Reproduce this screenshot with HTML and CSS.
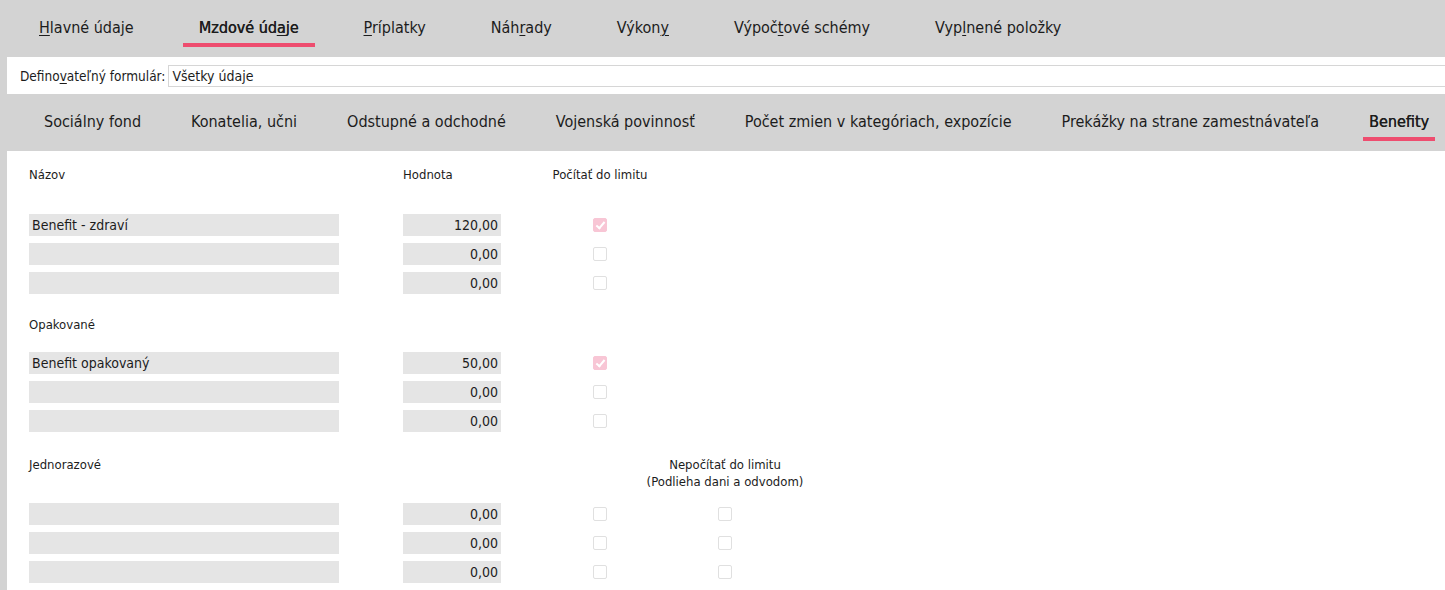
FILE: index.html
```html
<!DOCTYPE html>
<html lang="sk">
<head>
  <meta charset="UTF-8">
  <title>Mzdové údaje - Benefity</title>
  <link rel="stylesheet" href="styles.css">
</head>
<body>
  <!-- horné záložky -->
  <nav class="tabs tabs-main">
    <a class="tab"><span><u>H</u>lavné údaje</span></a>
    <a class="tab active"><span>Mzdové úd<u>a</u>je</span></a>
    <a class="tab"><span><u>P</u>ríplatky</span></a>
    <a class="tab"><span>Náh<u>r</u>ady</span></a>
    <a class="tab"><span>Výkon<u>y</u></span></a>
    <a class="tab"><span>Výpoč<u>t</u>ové schémy</span></a>
    <a class="tab"><span>Vyp<u>l</u>nené položky</span></a>
  </nav>

  <div class="form-bar">
    <label>Defino<u>v</u>ateľný formulár:</label>
    <div class="select">Všetky údaje</div>
  </div>

  <!-- podzáložky mzdových údajov -->
  <nav class="tabs tabs-sub">
    <a class="tab"><span>Sociálny fond</span></a>
    <a class="tab"><span>Konatelia, učni</span></a>
    <a class="tab"><span>Odstupné a odchodné</span></a>
    <a class="tab"><span>Vojenská povinnosť</span></a>
    <a class="tab"><span>Počet zmien v kategóriach, expozície</span></a>
    <a class="tab"><span>Prekážky na strane zamestnávateľa</span></a>
    <a class="tab active"><span>Benefity</span></a>
  </nav>

  <main class="content">
    <div class="grid head-row">
      <div>Názov</div>
      <div>Hodnota</div>
      <div class="center">Počítať do limitu</div>
    </div>

    <div class="grid rows">
      <div class="field">Benefit - zdraví</div>
      <div class="field num">120,00</div>
      <span class="chk checked"></span>
      <div></div>

      <div class="field"></div>
      <div class="field num">0,00</div>
      <span class="chk"></span>
      <div></div>

      <div class="field"></div>
      <div class="field num">0,00</div>
      <span class="chk"></span>
      <div></div>
    </div>

    <div class="section-label">Opakované</div>

    <div class="grid rows">
      <div class="field">Benefit opakovaný</div>
      <div class="field num">50,00</div>
      <span class="chk checked"></span>
      <div></div>

      <div class="field"></div>
      <div class="field num">0,00</div>
      <span class="chk"></span>
      <div></div>

      <div class="field"></div>
      <div class="field num">0,00</div>
      <span class="chk"></span>
      <div></div>
    </div>

    <div class="grid once-row">
      <div>Jednorazové</div>
      <div></div>
      <div></div>
      <div class="center wide">Nepočítať do limitu<br>(Podlieha dani a odvodom)</div>
    </div>

    <div class="grid rows">
      <div class="field"></div>
      <div class="field num">0,00</div>
      <span class="chk"></span>
      <span class="chk"></span>

      <div class="field"></div>
      <div class="field num">0,00</div>
      <span class="chk"></span>
      <span class="chk"></span>

      <div class="field"></div>
      <div class="field num">0,00</div>
      <span class="chk"></span>
      <span class="chk"></span>
    </div>
  </main>
</body>
</html>
```

FILE: styles.css
```css
body {
  margin: 0;
  background-color: #d3d3d3;
  font-family: "DejaVu Sans Condensed", "DejaVu Sans", sans-serif;
  color: #1c1c1c;
  overflow: hidden;
}

u {
  text-decoration-thickness: 1px;
  text-underline-offset: 2px;
}

/* záložky */
.tabs {
  display: flex;
  height: 57px;
  font-size: 16px;
}

.tabs-main {
  padding-left: 23px;
  gap: 33px;
}

.tabs-sub {
  padding-left: 38px;
  gap: 38px;
}

.tab {
  padding-top: 18px;
  white-space: nowrap;
  cursor: pointer;
}

.tab span {
  display: inline-block;
  line-height: 20px;
  padding: 0 16px 5px;
  border-bottom: 4px solid transparent;
}

.tabs-sub .tab span {
  padding: 0 6px 5px;
}

.tab.active span {
  border-bottom-color: #ee4d6f;
  text-shadow: 0.4px 0 0 currentColor;
}

/* definovateľný formulár */
.form-bar {
  display: flex;
  align-items: center;
  height: 37px;
  margin-left: 7px;
  padding-left: 13px;
  background-color: #fff;
  font-size: 13.5px;
}

.form-bar label {
  margin-right: 3px;
}

.select {
  flex: 1;
  height: 22px;
  line-height: 20px;
  margin-right: -20px;
  padding-left: 3px;
  border: 1px solid #d6d6d6;
  box-sizing: border-box;
  font-size: 14px;
}

/* obsah */
.content {
  margin-left: 7px;
  padding: 16px 0 40px 22px;
  background-color: #fff;
  font-size: 13px;
  min-height: 480px;
}

.grid {
  display: grid;
  grid-template-columns: 374px 137px 120px 130px;
}

.center {
  text-align: center;
}

.wide {
  justify-self: center;
  white-space: nowrap;
}

.head-row {
  line-height: 16px;
  margin-bottom: 31px;
}

.rows {
  row-gap: 7px;
  align-items: center;
}

.section-label {
  line-height: 16px;
  margin: 23px 0 19px;
}

.once-row {
  line-height: 17px;
  margin: 24px 0 13px;
}

.field {
  height: 22px;
  line-height: 22px;
  padding: 0 3px;
  background-color: #e5e5e5;
  font-size: 14px;
  box-sizing: border-box;
  width: 310px;
}

.field.num {
  width: 98px;
  text-align: right;
  padding-right: 3px;
}

.chk {
  justify-self: center;
  width: 14px;
  height: 14px;
  border: 1px solid #e0e0e0;
  border-radius: 2px;
  box-sizing: border-box;
  position: relative;
}

.chk.checked {
  background-color: #f8c6d5;
  border-color: #f8c6d5;
}

.chk.checked::after {
  content: "";
  position: absolute;
  left: 4px;
  top: 1px;
  width: 3px;
  height: 7px;
  border: solid #fff;
  border-width: 0 2px 2px 0;
  transform: rotate(40deg);
}
```
